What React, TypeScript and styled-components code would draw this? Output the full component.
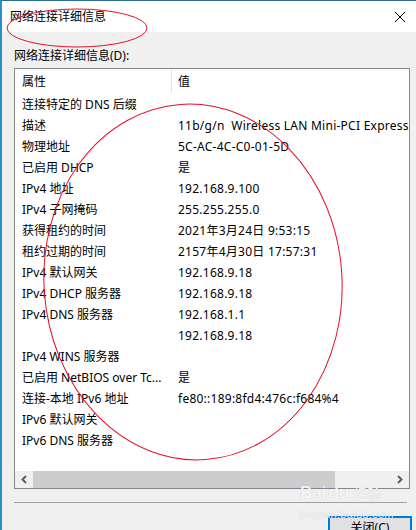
import React from 'react';
import styled, { createGlobalStyle } from 'styled-components';

const GlobalStyle = createGlobalStyle`
  html, body {
    margin: 0;
    padding: 0;
    background: #f0f0f0;
  }
  body {
    font-family: "Noto Sans", "Noto Sans CJK SC", sans-serif;
    font-size: 12px;
    color: #000;
  }
`;

const Window = styled.div`
  position: relative;
  width: 416px;
  height: 530px;
  box-sizing: border-box;
  border-left: 2px solid #2b8fc4;
  border-top: 1px solid #2a6f93;
  background: #f0f0f0;
  overflow: hidden;
`;

const TitleBar = styled.div`
  height: 31px;
  background: #fff;
  display: flex;
  align-items: center;
  justify-content: space-between;
  padding: 0 8px 0 8px;
`;

const Title = styled.span`
  font-size: 12px;
  line-height: 16px;
`;

const CloseBtn = styled.div`
  width: 16px;
  height: 16px;
  display: flex;
  align-items: center;
  justify-content: center;
`;

const Body = styled.div`
  padding: 16px 0 0 12px;
`;

const Label = styled.div`
  line-height: 16px;
  margin-bottom: 4px;
`;

const ListBox = styled.div`
  width: 396px;
  height: 421px;
  box-sizing: border-box;
  border: 1px solid #828790;
  background: #fff;
  display: flex;
  flex-direction: column;
`;

const HeaderRow = styled.div`
  display: flex;
  height: 24px;
`;

const HeaderCell = styled.div<{ $w?: number }>`
  width: ${p => (p.$w ? `${p.$w}px` : 'auto')};
  flex: ${p => (p.$w ? 'none' : '1')};
  box-sizing: border-box;
  padding-left: ${p => (p.$w ? 7 : 6)}px;
  padding-top: 2px;
  height: 24px;
  line-height: 22px;
  border-right: ${p => (p.$w ? '1px solid #e5e5e5' : 'none')};
`;

const Rows = styled.div`
  flex: 1;
  overflow: hidden;
`;

const Row = styled.div`
  display: flex;
  height: 21px;
  box-sizing: border-box;
  padding-top: 2px;
  line-height: 19px;
  white-space: pre;
`;

const KeyCell = styled.div`
  width: 157px;
  flex: none;
  box-sizing: border-box;
  padding-left: 7px;
  overflow: hidden;
`;

const ValCell = styled.div`
  flex: 1;
  padding-left: 6px;
  overflow: hidden;
  letter-spacing: 0.25px;
`;

const HScroll = styled.div`
  height: 17px;
  display: flex;
  background: #f0f0f0;
`;

const Arrow = styled.div`
  width: 18px;
  display: flex;
  align-items: center;
  justify-content: center;
`;

const Track = styled.div`
  flex: 1;
  display: flex;
`;

const Thumb = styled.div`
  width: 302px;
  background: #cdcdcd;
`;

const Separator = styled.div`
  width: 393px;
  height: 1px;
  background: #a0a0a0;
  margin-top: 13px;
`;

const ButtonRow = styled.div`
  display: flex;
  justify-content: flex-end;
  padding-right: 4px;
  margin-top: 13px;
`;

const Button = styled.div`
  width: 84px;
  height: 24px;
  box-sizing: border-box;
  border: 2px solid #0078d7;
  background: #e1e1e1;
  text-align: center;
  line-height: 20px;
`;

const Overlay = styled.svg`
  position: absolute;
  left: -2px;
  top: -1px;
  pointer-events: none;
`;

const Watermark = styled.div`
  position: absolute;
  left: 298px;
  top: 482px;
  display: flex;
  flex-direction: column;
  align-items: flex-start;
  color: rgba(255, 255, 255, 0.9);
  text-shadow: 0 0 1px rgba(0, 0, 0, 0.22);
  pointer-events: none;
`;

const MarkTop = styled.div`
  display: flex;
  align-items: flex-end;
  gap: 2px;
  font-family: "Liberation Sans", Arial, sans-serif;
  font-weight: bold;
  font-size: 17px;
  line-height: 20px;
`;

const MarkCn = styled.span`
  font-family: "Noto Sans CJK SC", sans-serif;
  font-size: 14px;
  font-weight: normal;
  margin-left: 2px;
`;

const MarkUrl = styled.div`
  font-family: "Liberation Sans", Arial, sans-serif;
  font-size: 11px;
  line-height: 14px;
  margin-top: 4px;
  letter-spacing: 0.3px;
`;

const rows: [string, string][] = [
  ['连接特定的 DNS 后缀', ''],
  ['描述', '11b/g/n  Wireless LAN Mini-PCI Express Adapter'],
  ['物理地址', '5C-AC-4C-C0-01-5D'],
  ['已启用 DHCP', '是'],
  ['IPv4 地址', '192.168.9.100'],
  ['IPv4 子网掩码', '255.255.255.0'],
  ['获得租约的时间', '2021年3月24日 9:53:15'],
  ['租约过期的时间', '2157年4月30日 17:57:31'],
  ['IPv4 默认网关', '192.168.9.18'],
  ['IPv4 DHCP 服务器', '192.168.9.18'],
  ['IPv4 DNS 服务器', '192.168.1.1'],
  ['', '192.168.9.18'],
  ['IPv4 WINS 服务器', ''],
  ['已启用 NetBIOS over Tc...', '是'],
  ['连接-本地 IPv6 地址', 'fe80::189:8fd4:476c:f684%4'],
  ['IPv6 默认网关', ''],
  ['IPv6 DNS 服务器', ''],
];

export default function App() {
  return (
    <>
      <GlobalStyle />
      <Window>
        <TitleBar>
          <Title>网络连接详细信息</Title>
          <CloseBtn>
            <svg width="12" height="12" viewBox="0 0 12 12">
              <path d="M1 1 L11 11 M11 1 L1 11" stroke="#000" strokeWidth="1" />
            </svg>
          </CloseBtn>
        </TitleBar>
        <Body>
          <Label>网络连接详细信息(D):</Label>
          <ListBox>
            <HeaderRow>
              <HeaderCell $w={157}>属性</HeaderCell>
              <HeaderCell>值</HeaderCell>
            </HeaderRow>
            <Rows>
              {rows.map(([k, v], i) => (
                <Row key={i}>
                  <KeyCell>{k}</KeyCell>
                  <ValCell>{v}</ValCell>
                </Row>
              ))}
            </Rows>
            <HScroll>
              <Arrow>
                <svg width="8" height="9" viewBox="0 0 8 9">
                  <path d="M6 1 L2.5 4.5 L6 8" stroke="#606060" strokeWidth="2" fill="none" />
                </svg>
              </Arrow>
              <Track>
                <Thumb />
              </Track>
              <Arrow>
                <svg width="8" height="9" viewBox="0 0 8 9">
                  <path d="M2 1 L5.5 4.5 L2 8" stroke="#606060" strokeWidth="2" fill="none" />
                </svg>
              </Arrow>
            </HScroll>
          </ListBox>
          <Separator />
          <ButtonRow>
            <Button>关闭(C)</Button>
          </ButtonRow>
        </Body>
        <Watermark>
          <MarkTop>
            <span>Bai</span>
            <span>du</span>
            <MarkCn>经验</MarkCn>
          </MarkTop>
          <MarkUrl>jingyan.baidu.com</MarkUrl>
        </Watermark>
        <Overlay width="416" height="530" viewBox="0 0 416 530">
          <ellipse cx="77" cy="28" rx="70" ry="19" fill="none" stroke="#e8102a" strokeWidth="1" />
          <ellipse
            cx="193"
            cy="282"
            rx="149"
            ry="178"
            fill="none"
            stroke="#e8102a"
            strokeWidth="1"
            transform="rotate(-4 193 282)"
          />
        </Overlay>
      </Window>
    </>
  );
}
